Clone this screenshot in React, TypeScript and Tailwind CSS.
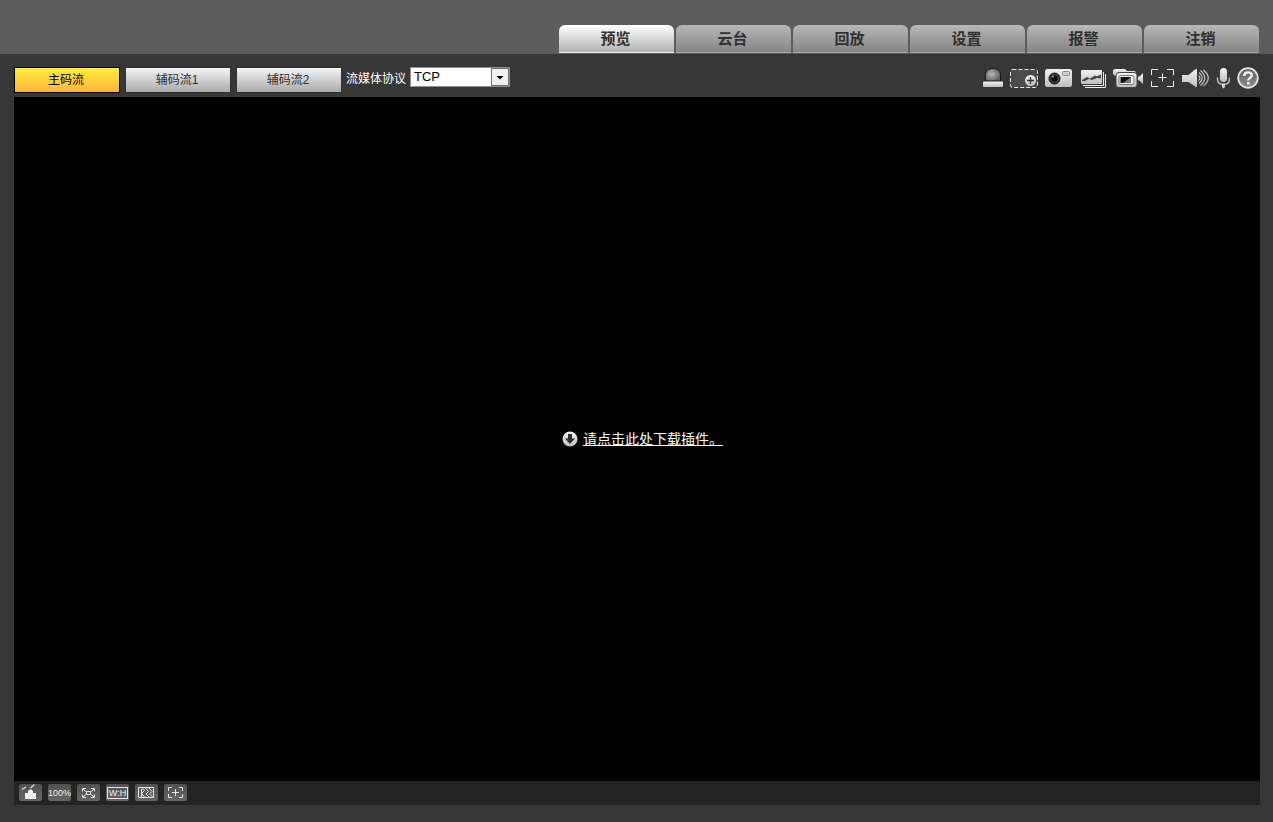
import React from "react";

const tabs = ["预览", "云台", "回放", "设置", "报警", "注销"];
const streams = ["主码流", "辅码流1", "辅码流2"];

function Gradients() {
  return (
    <svg width="0" height="0" className="absolute" aria-hidden="true">
      <defs>
        <linearGradient id="silver" x1="0" y1="0" x2="0" y2="1">
          <stop offset="0" stopColor="#f4f4f4" />
          <stop offset="1" stopColor="#bdbdbd" />
        </linearGradient>
        <radialGradient id="dome" cx="0.4" cy="0.45" r="0.6">
          <stop offset="0" stopColor="#b8b8b8" />
          <stop offset="1" stopColor="#606060" />
        </radialGradient>
        <linearGradient id="disc" x1="0" y1="0" x2="0" y2="1">
          <stop offset="0" stopColor="#606060" />
          <stop offset="1" stopColor="#8c8c8c" />
        </linearGradient>
      </defs>
    </svg>
  );
}

function AlarmIcon() {
  return (
    <svg width="20" height="22" viewBox="0 0 20 22" aria-hidden="true">
      <path d="M2.500 14V8.500C2.500 4 5.500 1.500 10 1.500s7.500 2.500 7.500 7V14z" fill="url(#dome)" stroke="#151515" />
      <rect x="0" y="14.500" width="20" height="5.500" rx="1" fill="url(#silver)" />
    </svg>
  );
}

function RegionIcon() {
  return (
    <svg width="28" height="22" viewBox="0 0 28 22" aria-hidden="true">
      <rect x="0.5" y="2.5" width="27" height="18" rx="2" fill="#4b4b4b" stroke="#e8e8e8" strokeDasharray="4 2" />
      <circle cx="20.500" cy="13.500" r="5.500" fill="url(#silver)" />
      <path d="M17 13.500h7M20.500 10v7" stroke="#333" strokeWidth="1.300" />
    </svg>
  );
}

function CameraIcon() {
  return (
    <svg width="27" height="22" viewBox="0 0 27 22" aria-hidden="true">
      <rect x="0" y="2" width="27" height="18" rx="2.500" fill="url(#silver)" />
      <circle cx="9.500" cy="11.500" r="5.500" fill="#3c3c3c" stroke="#111" />
      <circle cx="9.500" cy="11.500" r="3" fill="#080808" />
      <circle cx="8" cy="9.500" r="1" fill="#aaa" />
      <rect x="17.500" y="4.500" width="7" height="4" rx="1" fill="#d0d0d0" stroke="#888" />
    </svg>
  );
}

function PicturesIcon() {
  return (
    <svg width="27" height="22" viewBox="0 0 27 22" aria-hidden="true">
      <path d="M6 20.500h20.500V7M4 18.500h20.500V5" fill="none" stroke="#eee" />
      <rect x="2" y="3" width="21" height="14" rx="1" fill="url(#silver)" />
      <path d="M3 13l5-3 3 1.500 5-3 2 .8 4-1.800v4l-4-.5-5 2-3-1-4 2H3z" fill="#484848" />
    </svg>
  );
}

function VideoIcon() {
  return (
    <svg width="31" height="22" viewBox="0 0 31 22" aria-hidden="true">
      <path d="M3 2h9l2 2h7q2 0 2 3H3.500L3 9H2L0 7V4q0-2 3-2z" fill="url(#silver)" />
      <path d="M6 5.500h15q3 0 3 3V18q0 2.500-3 2.500H6q-3 0-3-2.500V8.500q0-3 3-3z" fill="url(#silver)" stroke="#454545" />
      <rect x="6" y="8.500" width="15" height="9" rx="2" fill="#eee" stroke="#777" />
      <rect x="7.500" y="10" width="10.500" height="6" fill="#111" />
      <path d="M18 10v6h-8z" fill="#777" />
      <path d="M25 10l2-1 3-3v11l-3-3-2-1z" fill="url(#silver)" />
    </svg>
  );
}

function FocusIcon() {
  return (
    <svg width="23" height="22" viewBox="0 0 23 22" aria-hidden="true">
      <path d="M7 2.500H.5V8M16 2.500h6.500V8M.5 14v5.500H7M22.500 14v5.500H16M7.500 10.500h8M11.500 6.500v8" fill="none" stroke="#eee" />
    </svg>
  );
}

function SpeakerIcon() {
  return (
    <svg width="28" height="22" viewBox="0 0 28 22" aria-hidden="true">
      <path d="M1 8h6.500L14 2.500l2-.5v18l-2-.5L7.500 15H1z" fill="url(#silver)" />
      <path d="M17.500 8.500q3 2.500 0 5M18 5.500q6.500 5.500 0 11M19.500 3.500q8.500 7.500 0 15M22.500 3q9.500 8 0 16" fill="none" stroke="#c4c4c4" strokeWidth="1.200" />
    </svg>
  );
}

function MicIcon() {
  return (
    <svg width="14" height="22" viewBox="0 0 14 22" aria-hidden="true">
      <rect x="4" y="1" width="7" height="14" rx="3.500" fill="url(#silver)" />
      <path d="M1.500 10.500v1.500q0 5.500 6 5.500t6-5.500v-1.500" fill="none" stroke="#b5b5b5" strokeWidth="1.600" />
      <path d="M6 16.500h3v3.500l-1.500 1.500L6 20z" fill="#d0d0d0" />
    </svg>
  );
}

function HelpIcon() {
  return (
    <svg width="22" height="22" viewBox="0 0 22 22" aria-hidden="true">
      <circle cx="11" cy="11" r="9.800" fill="url(#disc)" stroke="#e4e4e4" strokeWidth="1.800" />
      <path d="M7.200 9C7.200 4.300 14.800 4.400 14.800 8.300c0 2.500-3.600 2.700-3.600 5.200" fill="none" stroke="#f4f4f4" strokeWidth="2.400" />
      <rect x="10" y="15" width="2.500" height="2.500" fill="#f4f4f4" />
    </svg>
  );
}

const tools: { label: string; icon: React.ReactNode }[] = [
  { label: "报警输出", icon: <AlarmIcon /> },
  { label: "局部放大", icon: <RegionIcon /> },
  { label: "抓图", icon: <CameraIcon /> },
  { label: "连拍", icon: <PicturesIcon /> },
  { label: "录像", icon: <VideoIcon /> },
  { label: "辅助聚焦", icon: <FocusIcon /> },
  { label: "音频", icon: <SpeakerIcon /> },
  { label: "对讲", icon: <MicIcon /> },
  { label: "帮助", icon: <HelpIcon /> },
];

const views: { label: string; icon: React.ReactNode }[] = [
  {
    label: "图像调节",
    icon: (
      <svg width="23" height="17" viewBox="0 0 23 17" aria-hidden="true">
        <path d="M6 9h3V7l1.500-1.500h2L14 7v2h3v6H6z" fill="#eee" />
        <path d="M3 5.500L7 3M11.500 4L15.500 .5" stroke="#ddd" strokeWidth="1.300" />
      </svg>
    ),
  },
  { label: "原始大小", icon: "100%" },
  {
    label: "全屏",
    icon: (
      <svg width="23" height="17" viewBox="0 0 23 17" aria-hidden="true">
        <path d="M5.500 7.500V4.500H9M14 4.500h3.500V7.500M5.500 10.500v3H9M14 13.500h3.500v-3M6 5l3.500 3M17 5l-3.500 3M6 13l3.500-3M17 13l-3.500-3M9.500 7.500h4v3h-4z" fill="none" stroke="#e5e5e5" />
      </svg>
    ),
  },
  {
    label: "宽高比",
    icon: <span className="flex h-3 w-[21px] items-center justify-center border border-[#e5e5e5]">W:H</span>,
  },
  {
    label: "流畅度调节",
    icon: (
      <svg width="23" height="17" viewBox="0 0 23 17" aria-hidden="true">
        <path d="M3.500 3.500h15v10h-15z" fill="none" stroke="#e5e5e5" />
        <path d="M6.500 13V5h2l1 1.500-3 3 3 3.500M10.500 4l3 3.500-2.500 2.500 3 3M14 4l3 3.500-2.500 2.500 3 3" fill="none" stroke="#e5e5e5" />
      </svg>
    ),
  },
  {
    label: "规则信息",
    icon: (
      <svg width="23" height="17" viewBox="0 0 23 17" aria-hidden="true">
        <path d="M8 3.500H4.500V7M15 3.500h3.500V7M4.500 10v3.500H8M18.500 10v3.500H15M8 8.500h7M11.500 5v7" fill="none" stroke="#e5e5e5" />
      </svg>
    ),
  },
];

export default function App() {
  const [tab, setTab] = React.useState(0);
  const [stream, setStream] = React.useState(0);

  return (
    <div className="flex min-h-screen flex-col bg-[#373737] font-['Liberation_Sans','Noto_Sans_CJK_SC',sans-serif] text-xs">
      <Gradients />
      <header className="bg-[#5c5c5c] pt-[25px] pr-3.5 pb-px">
        <nav className="flex justify-end gap-0.5">
          {tabs.map((name, i) => (
            <button
              key={name}
              onClick={() => setTab(i)}
              className={
                "h-7 w-[115px] rounded-t-md border-b pr-0.5 text-[15px] leading-5 font-bold text-[#303030] " +
                (tab === i
                  ? "border-[#f0f0f0] bg-linear-to-b from-white to-[#b2b2b2]"
                  : "border-[#aaaaaa] bg-linear-to-b from-[#b8b8b8] to-[#858585]")
              }
            >
              {name}
            </button>
          ))}
        </nav>
      </header>

      <div className="flex h-[43px] items-start justify-between px-3.5 pt-[13px]">
        <div className="flex items-start">
          <div className="flex gap-[5px]">
            {streams.map((name, i) => (
              <button
                key={name}
                onClick={() => setStream(i)}
                className={
                  "h-[26px] w-[106px] border pr-0.5 leading-4 " +
                  (stream === i
                    ? "border-black bg-linear-to-b from-[#ffed3d] to-[#ffb43a] text-black"
                    : "border-[#303030] bg-linear-to-b from-[#f5f5f5] to-[#aaaaaa] text-[#303030]")
                }
              >
                {name}
              </button>
            ))}
          </div>
          <label htmlFor="protocol" className="ml-1 leading-6 text-white">
            流媒体协议
          </label>
          <div className="relative ml-1">
            <select
              id="protocol"
              className="block h-5 w-[100px] appearance-none border border-[#8f8f8f] bg-white pl-[3px] text-[13px] leading-[18px] text-black"
            >
              <option>TCP</option>
              <option>UDP</option>
            </select>
            <svg width="18" height="18" viewBox="0 0 18 18" className="pointer-events-none absolute top-px right-px" aria-hidden="true">
              <rect x="0.5" y="0.5" width="17" height="17" fill="#f0f0f0" stroke="#707070" />
              <path d="M5.500 8h7L9 11.500z" fill="#000" />
            </svg>
          </div>
        </div>
        <div className="flex gap-[7px]">
          {tools.map((t) => (
            <button key={t.label} aria-label={t.label}>
              {t.icon}
            </button>
          ))}
        </div>
      </div>

      <main className="mr-[13px] mb-[17px] ml-3.5 flex flex-1 flex-col">
        <div className="flex flex-1 items-center justify-center bg-black pr-px pl-3">
          <a href="#plugin" className="flex items-center gap-[5px] text-sm leading-5 text-white">
            <svg width="16" height="16" viewBox="0 0 16 16" aria-hidden="true">
              <circle cx="8" cy="8" r="7.500" fill="url(#silver)" />
              <path d="M6 3h4v4.500h3L8 13 3 7.500h3z" fill="#303030" />
            </svg>
            <span className="underline">请点击此处下载插件。</span>
          </a>
        </div>
        <div className="flex h-6 gap-1.5 bg-[#242424] pt-[3px] pl-[5px]">
          {views.map((v) => (
            <button
              key={v.label}
              aria-label={v.label}
              className="flex h-[17px] w-[23px] items-center justify-center rounded-xs bg-linear-to-b from-[#505050] to-[#666666] text-[9px] leading-3 text-[#f0f0f0]"
            >
              {v.icon}
            </button>
          ))}
        </div>
      </main>
    </div>
  );
}
